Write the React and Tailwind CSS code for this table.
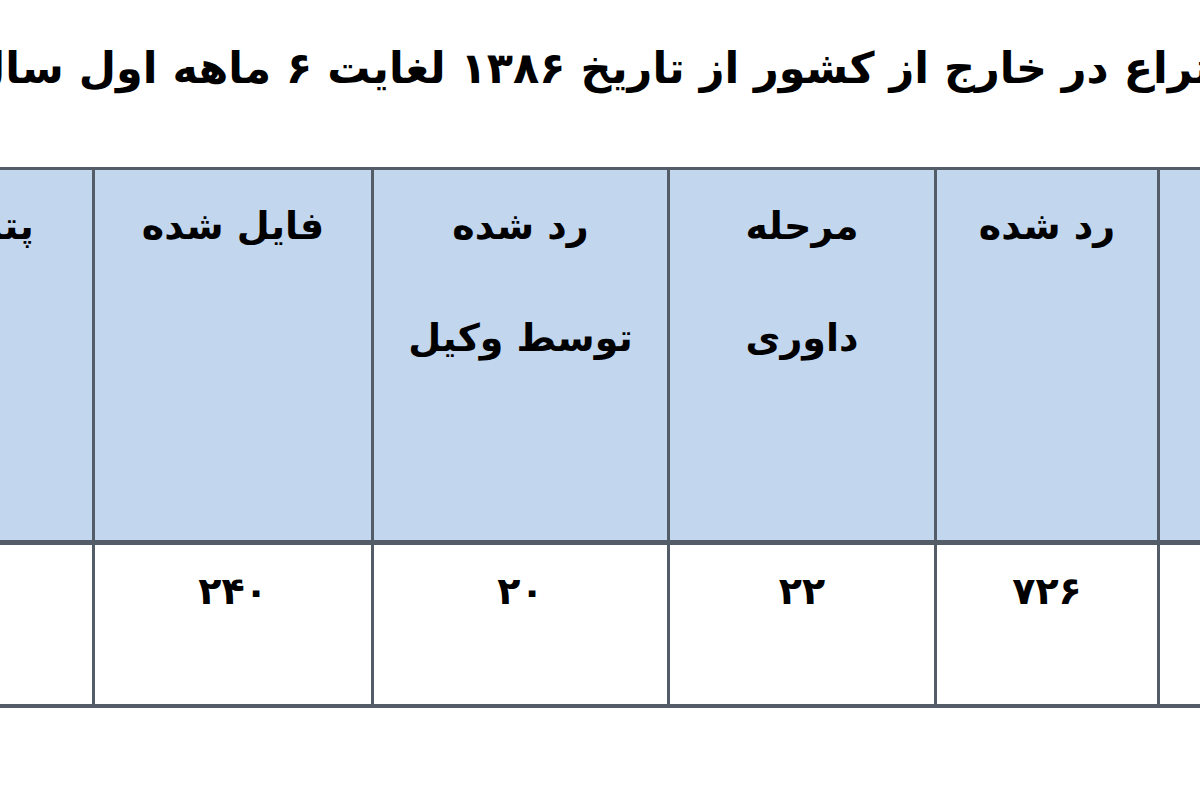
import React from 'react';

const headers = [
  { lines: [''] },
  { lines: ['رد شده'] },
  { lines: ['مرحله', 'داوری'] },
  { lines: ['رد شده', 'توسط وکیل'] },
  { lines: ['فایل شده'] },
  { lines: ['پتنت شده'] },
];

const values = ['', '۷۲۶', '۲۲', '۲۰', '۲۴۰', ''];

const widths = ['w-[240px]', 'w-[223px]', 'w-[267px]', 'w-[296px]', 'w-[279px]', 'w-[300px]'];

const App = () => {
  return (
    <div
      className="w-[1200px] h-[800px] bg-white overflow-hidden text-black"
      style={{ fontFamily: '"DejaVu Sans", sans-serif' }}
      dir="rtl"
    >
      <div className="h-[167px] overflow-hidden pt-[37px]">
        <p className="whitespace-nowrap text-[43px] font-bold leading-[62px] -mr-[152px]">
          ثبت اختراع در خارج از کشور از تاریخ ۱۳۸۶ لغایت ۶ ماهه اول سال ۱۳۸۸
        </p>
      </div>

      <div className="overflow-hidden">
        <table className="table-fixed border-collapse -mr-[200px] w-[1605px]">
          <thead>
            <tr className="h-[374px]">
              {headers.map((h, i) => (
                <th
                  key={i}
                  className={`${widths[i]} align-top bg-[#c2d6ee] border-x-[3px] border-t-[3px] border-b-[5px] border-[#545c67] text-[38px] font-bold leading-[112px] text-center`}
                >
                  {h.lines.map((l, j) => (
                    <div key={j}>{l}</div>
                  ))}
                </th>
              ))}
            </tr>
          </thead>
          <tbody>
            <tr className="h-[163px]">
              {values.map((v, i) => (
                <td
                  key={i}
                  className={`${widths[i]} align-top bg-white border-x-[3px] border-b-[4px] border-[#545c67] text-[38px] font-bold leading-[92px] text-center`}
                >
                  {v}
                </td>
              ))}
            </tr>
          </tbody>
        </table>
      </div>
    </div>
  );
};

export default App;
